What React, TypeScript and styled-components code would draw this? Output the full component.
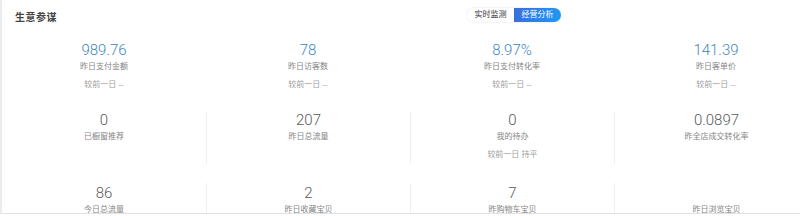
import React from 'react'
import styled, { createGlobalStyle } from 'styled-components'

const GlobalStyle = createGlobalStyle`
  html, body { margin: 0; padding: 0; background: #fff; }
  body { font-family: "Liberation Sans", "Noto Sans CJK SC", sans-serif; }
`

const Panel = styled.div`
  width: 800px;
  height: 214px;
  overflow: hidden;
  border-left: 2px solid #ececec;
  border-bottom: 1px solid #e2e2e2;
  box-sizing: border-box;
`

const Grid = styled.div<{ $top?: number; $h?: number }>`
  display: grid;
  grid-template-columns: repeat(4, 204px);
  margin-top: ${p => p.$top ?? 0}px;
  height: ${p => (p.$h ? `${p.$h}px` : 'auto')};
`

const Header = styled(Grid)`
  height: 32px;
  align-items: center;
`

const Title = styled.div`
  grid-column: 1 / 3;
  padding-left: 13px;
  font-size: 10px;
  font-weight: bold;
  color: #444;
  letter-spacing: 0.5px;
`

const Toggle = styled.div`
  grid-column: 3;
  justify-self: center;
  display: flex;
  height: 14px;
  margin-left: 4px;
  margin-top: -3px;
  border-radius: 7px;
  box-shadow: 0 0 2px rgba(0, 0, 0, 0.15);
  overflow: hidden;
`

const ToggleBtn = styled.div<{ $active?: boolean }>`
  width: 47px;
  font-size: 8px;
  line-height: 14px;
  text-align: center;
  color: ${p => (p.$active ? '#fff' : '#333')};
  background: ${p => (p.$active ? 'linear-gradient(90deg, #3b6fd8, #2196f3)' : '#fff')};
`

const Cell = styled.div<{ $divider?: boolean; $pad?: number }>`
  text-align: center;
  padding-top: ${p => p.$pad ?? 0}px;
  border-left: ${p => (p.$divider ? '1px solid #f0f0f0' : 'none')};
`

const Value = styled.div<{ $blue?: boolean }>`
  font-family: Roboto, "Liberation Sans", sans-serif;
  font-weight: 300;
  font-size: 15px;
  line-height: 16px;
  height: 16px;
  color: ${p => (p.$blue ? '#3d86bd' : '#5a5a5a')};
`

const Label = styled.div`
  font-size: 8px;
  line-height: 18px;
  color: #858585;
`

const Compare = styled.div`
  font-size: 8px;
  line-height: 18px;
  color: #a0a0a0;
`

type Stat = { value?: string; label: string; compare?: string }

const top: Stat[] = [
  { value: '989.76', label: '昨日支付金额', compare: '较前一日 --' },
  { value: '78', label: '昨日访客数', compare: '较前一日 --' },
  { value: '8.97%', label: '昨日支付转化率', compare: '较前一日 --' },
  { value: '141.39', label: '昨日客单价', compare: '较前一日 --' },
]

const middle: Stat[] = [
  { value: '0', label: '已橱窗推荐' },
  { value: '207', label: '昨日总流量' },
  { value: '0', label: '我的待办', compare: '较前一日 持平' },
  { value: '0.0897', label: '昨全店成交转化率' },
]

const bottom: Stat[] = [
  { value: '86', label: '今日总流量' },
  { value: '2', label: '昨日收藏宝贝' },
  { value: '7', label: '昨购物车宝贝' },
  { label: '昨日浏览宝贝' },
]

const StatRow = ({ items, blue, divided, top: mt, h, pad }: {
  items: Stat[], blue?: boolean, divided?: boolean, top: number, h?: number, pad?: number
}) => (
  <Grid $top={mt} $h={h}>
    {items.map((s, i) => (
      <Cell key={i} $divider={divided && i > 0} $pad={pad}>
        <Value $blue={blue}>{s.value}</Value>
        <Label>{s.label}</Label>
        {s.compare ? <Compare>{s.compare}</Compare> : null}
      </Cell>
    ))}
  </Grid>
)

export default function App() {
  return (
    <>
      <GlobalStyle />
      <Panel>
        <Header>
          <Title>生意参谋</Title>
          <Toggle>
            <ToggleBtn>实时监测</ToggleBtn>
            <ToggleBtn $active>经营分析</ToggleBtn>
          </Toggle>
        </Header>
        <StatRow items={top} blue top={10} />
        <StatRow items={middle} divided top={18} h={50} />
        <StatRow items={bottom} divided top={21} h={40} pad={2} />
      </Panel>
    </>
  )
}
